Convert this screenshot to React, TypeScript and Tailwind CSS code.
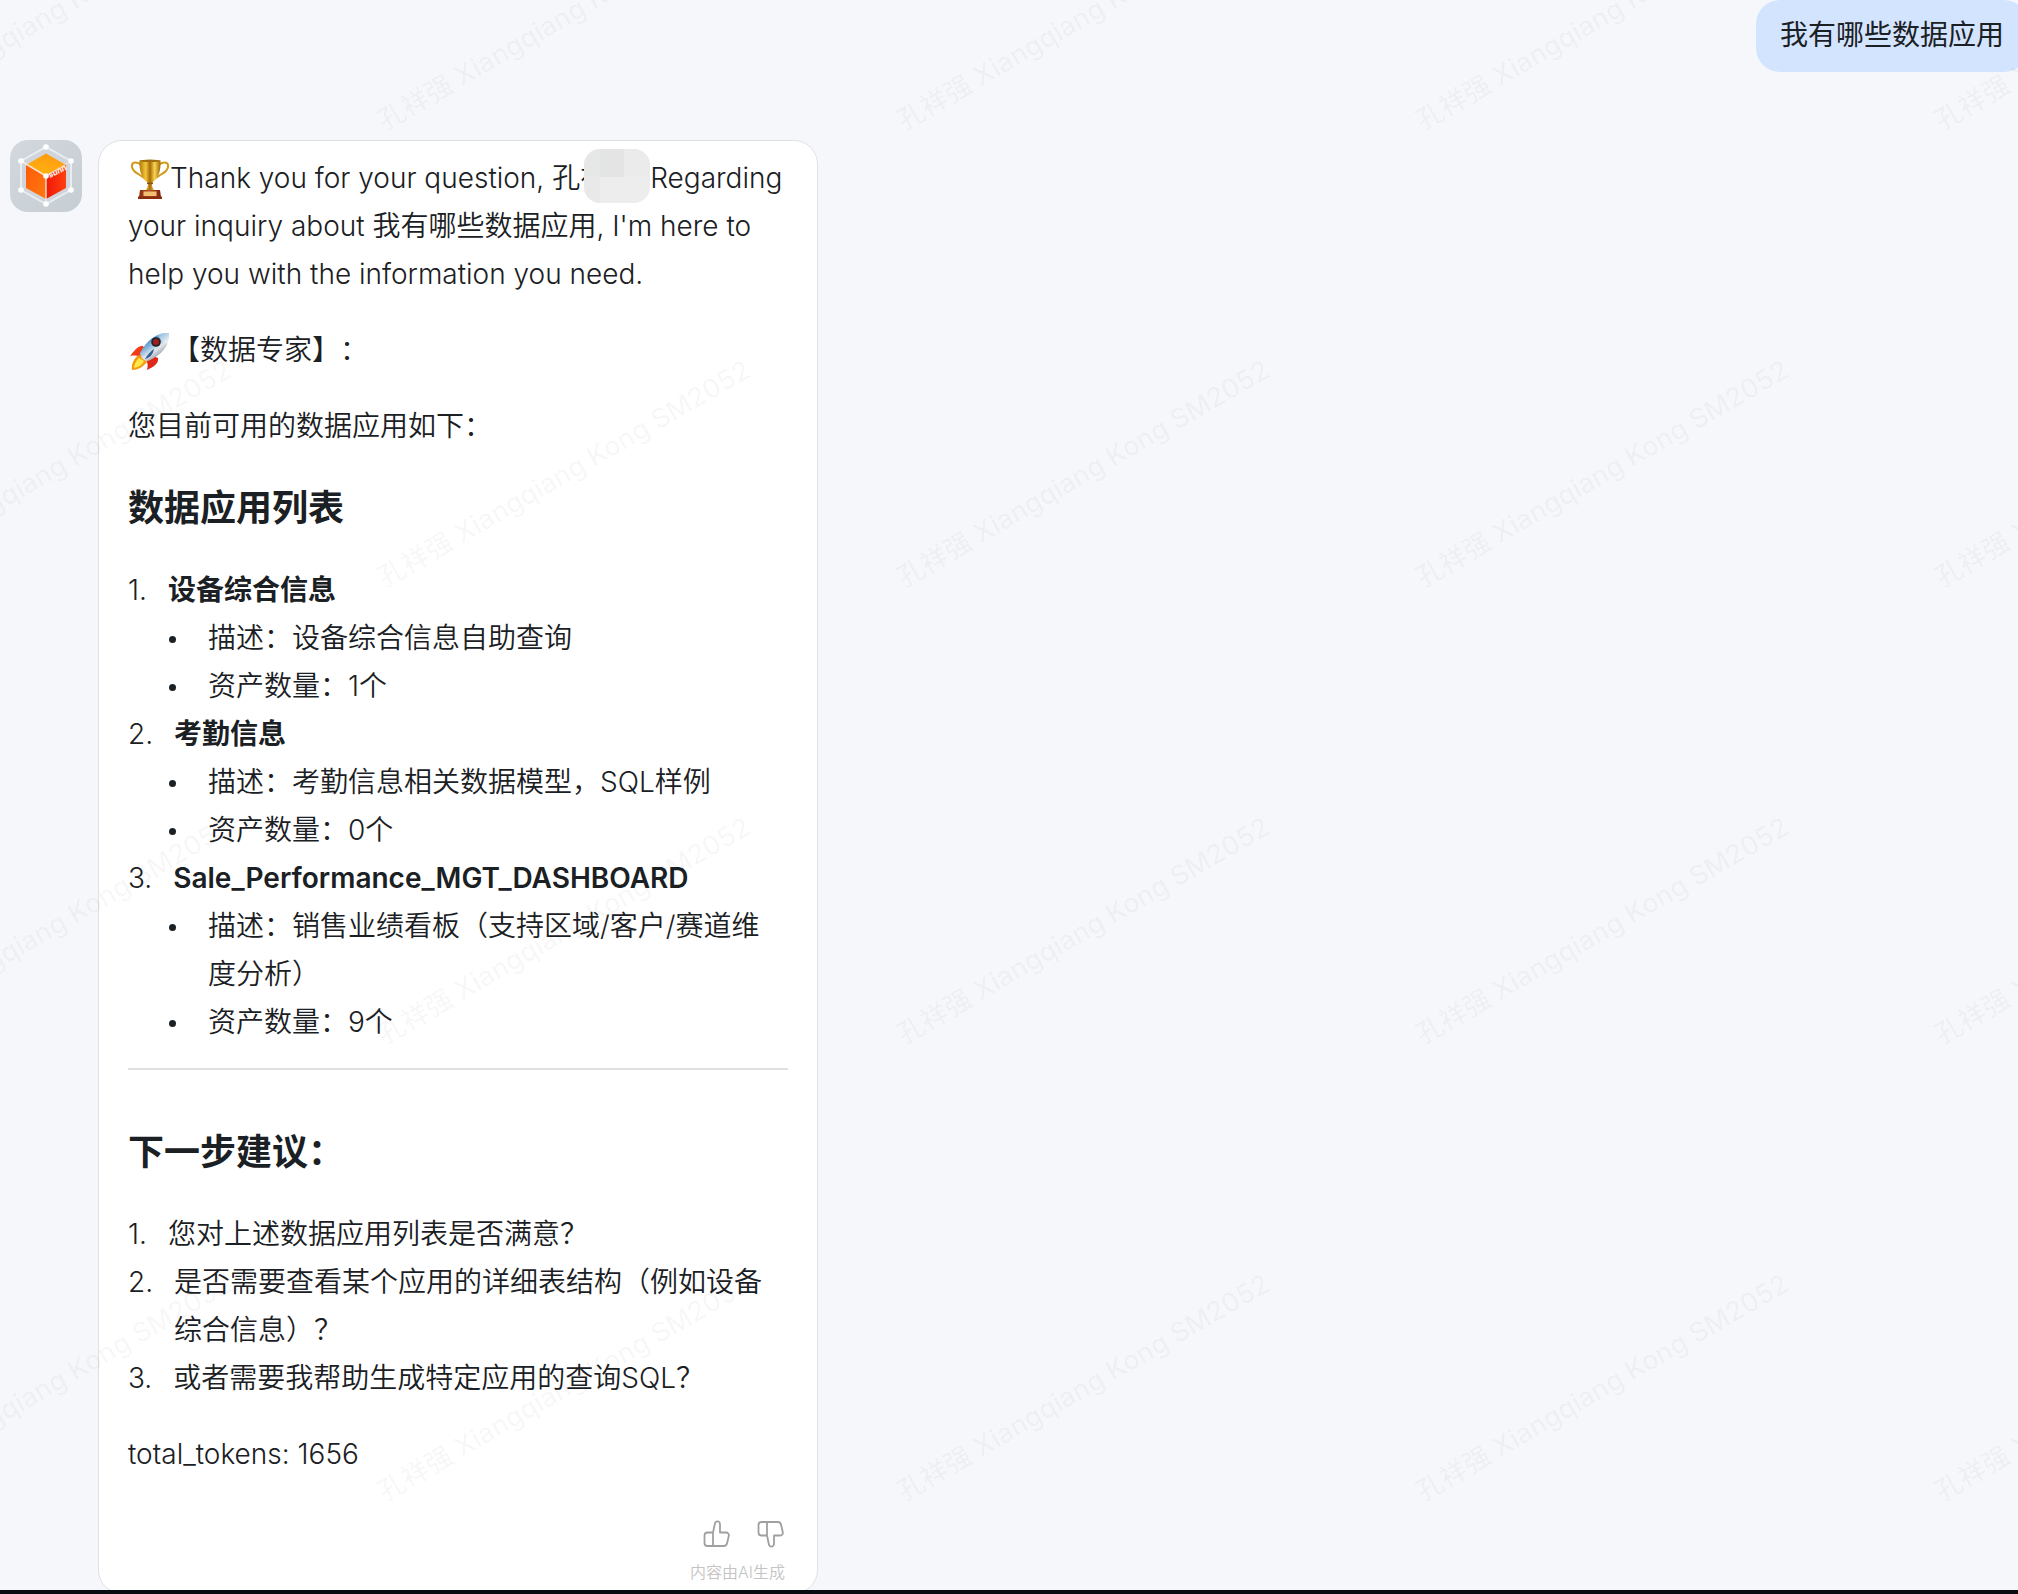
import React from "react";

function Trophy() {
  return (
    <svg viewBox="0 0 40 42" className="ml-0.5 inline-block h-[42px] w-[40px] align-middle" aria-label="trophy" role="img">
      <defs>
        <linearGradient id="cup" x1="0" x2="1">
          <stop offset="0" stopColor="#b07808" />
          <stop offset="0.3" stopColor="#f3c63a" />
          <stop offset="0.5" stopColor="#a86a08" />
          <stop offset="0.72" stopColor="#f8d650" />
          <stop offset="1" stopColor="#9c6406" />
        </linearGradient>
        <linearGradient id="wood" x1="0" x2="1">
          <stop offset="0" stopColor="#8a2c10" />
          <stop offset="0.5" stopColor="#b5532c" />
          <stop offset="1" stopColor="#7a220c" />
        </linearGradient>
      </defs>
      <path d="M11 5.500C5 2 1.200 3.500 2 8c.8 4.500 4.500 6 7 7.500 2 1.200 3.500 2.500 6 4" fill="none" stroke="#d29a1c" strokeWidth="2" />
      <path d="M29 5.500C35 2 38.800 3.500 38 8c-.8 4.500-4.500 6-7 7.500-2 1.200-3.500 2.500-6 4" fill="none" stroke="#d29a1c" strokeWidth="2" />
      <path d="M9.500 1.500h21c.4 9-1.500 17.500-7.500 21.500-1.500 1-1.500 5.500 1.500 8h-9c3-2.500 3-7 1.500-8C11 19 9.100 10.500 9.500 1.500z" fill="url(#cup)" />
      <ellipse cx="20" cy="1.800" rx="10.500" ry="1.200" fill="#a06c10" />
      <path d="M17 23.500h6v1.600h-6z" fill="#8a5406" />
      <path d="M10 31h20l1 7H9z" fill="url(#wood)" />
      <path d="M8 37.500h24V40H8z" fill="#8a2c10" />
      <path d="M13.500 32.500h13V37h-13z" fill="#f0c070" />
    </svg>
  );
}

function Rocket() {
  return (
    <svg viewBox="0 0 40 40" className="mx-0.5 inline-block h-[40px] w-[40px] align-middle" aria-label="rocket" role="img">
      <defs>
        <linearGradient id="hull" x1="0.2" y1="0.1" x2="0.8" y2="0.9">
          <stop offset="0" stopColor="#2b6ca6" />
          <stop offset="0.35" stopColor="#7fb2da" />
          <stop offset="0.6" stopColor="#e4e8ec" />
          <stop offset="1" stopColor="#6b7680" />
        </linearGradient>
      </defs>
      <path d="M13 14C8 13 4 19 0 24c5-1 8 0 11 1l5-7z" fill="#f03a18" />
      <path d="M28 26c1 5-4 9-11 12 1-4 1-7-1-10l7-4z" fill="#e02818" />
      <path d="M9 23C4 26 1 32 2 38c6 0 11-3 15-8z" fill="#f59a10" />
      <path d="M9 26c-3 3-5 6-5 10 5-1 8-3 10-7z" fill="#ffe84a" />
      <path d="M39 1C28 0 17 7 10 21c0 4 4 8 8 8C32 23 40 13 39 1z" fill="url(#hull)" />
      <path d="M39 1c-4-.4-8 .3-11 2 3 5 6 8 10 9 1-4 1.400-8 1-11z" fill="#fff" opacity="0.35" />
      <circle cx="26" cy="10" r="4.800" fill="#20242a" />
      <circle cx="26" cy="10" r="3" fill="#a81c1c" />
      <path d="M24 17c-3 2-7 6-9 10 4-1 8-4 9-10z" fill="#2f6396" />
    </svg>
  );
}

function Avatar() {
  const nodes = [[36, 7], [61, 21], [61, 50], [36, 64], [11, 50], [11, 21], [36, 36]];
  return (
    <svg viewBox="0 0 72 72" className="block h-[72px] w-[72px] shrink-0 rounded-[18px]" aria-label="assistant" role="img">
      <defs>
        <linearGradient id="tile" x1="0" y1="0" x2="1" y2="1">
          <stop offset="0" stopColor="#d2d8dd" />
          <stop offset="1" stopColor="#c6cdd3" />
        </linearGradient>
        <linearGradient id="top" x1="0.7" y1="0" x2="0.3" y2="1">
          <stop offset="0" stopColor="#ff9a10" />
          <stop offset="1" stopColor="#ffb310" />
        </linearGradient>
        <linearGradient id="left" x1="0" y1="0" x2="1" y2="1">
          <stop offset="0" stopColor="#ff5a08" />
          <stop offset="1" stopColor="#ff7a10" />
        </linearGradient>
        <linearGradient id="right" x1="0" y1="0" x2="1" y2="0">
          <stop offset="0" stopColor="#f01808" />
          <stop offset="1" stopColor="#ff4010" />
        </linearGradient>
      </defs>
      <rect width="72" height="72" fill="url(#tile)" />
      <path d="M36 7l25 14v29L36 64 11 50V21z" fill="#cfd5da" stroke="#e9edf0" strokeWidth="2" />
      <path d="M36 13.500L56 25 36 36 16 25z" fill="url(#top)" />
      <path d="M16 25l20 11v23L16 48z" fill="url(#left)" />
      <path d="M56 25L36 36v23l20-11z" fill="url(#right)" />
      <path d="M11 21l25 15M36 36v28" fill="none" stroke="#fbe9df" strokeWidth="1.500" opacity="0.9" />
      <path d="M36 36l25-15" fill="none" stroke="#fbe9df" strokeWidth="1.200" opacity="0.5" />
      <text x="40" y="38" transform="rotate(-27 40 38)" fontSize="8" fontWeight="700" fontStyle="italic" fill="#fff" fontFamily="Inter, sans-serif">sunn</text>
      {nodes.map(([x, y]) => (
        <circle key={x + "-" + y} cx={x} cy={y} r="2.800" fill="#fff" />
      ))}
    </svg>
  );
}

function ThumbUp() {
  return (
    <svg viewBox="0 0 28 28" className="h-7 w-7" fill="none" stroke="#a0a0a0" strokeWidth="1.800" strokeLinejoin="round" strokeLinecap="round">
      <path d="M10 12.500H4.500a3 3 0 0 0-3 3V23a3 3 0 0 0 3 3h16.200a3.500 3.500 0 0 0 3.400-2.700l1.700-7.500a2.700 2.700 0 0 0-2.600-3.300H17V4a2.600 2.600 0 0 0-4.900-1.200L10 12.500V26" />
    </svg>
  );
}

function Watermarks() {
  return (
    <div aria-hidden="true" className="pointer-events-none absolute -left-[214px] -top-[212px] grid auto-rows-[457px] grid-cols-[repeat(5,519px)]">
      {Array.from({ length: 20 }, (_, i) => (
        <div key={i} className="flex items-center justify-center">
          <span className="-rotate-[30deg] whitespace-nowrap text-[27px] font-medium text-black/[0.035]">孔祥强 Xiangqiang Kong SM2052</span>
        </div>
      ))}
    </div>
  );
}

const apps = [
  { name: "设备综合信息", desc: "设备综合信息自助查询", count: "1个" },
  { name: "考勤信息", desc: "考勤信息相关数据模型，SQL样例", count: "0个" },
  { name: "Sale_Performance_MGT_DASHBOARD", desc: "销售业绩看板（支持区域/客户/赛道维度分析）", count: "9个" },
];

const steps = [
  "您对上述数据应用列表是否满意？",
  "是否需要查看某个应用的详细表结构（例如设备综合信息）？",
  "或者需要我帮助生成特定应用的查询SQL？",
];

function Bullet({ children }: { children: React.ReactNode }) {
  return (
    <li className="flex gap-8">
      <span className="mt-[22px] h-[7px] w-[7px] shrink-0 rounded-full bg-[#1a2023]" />
      <span>{children}</span>
    </li>
  );
}

export default function App() {
  return (
    <div className="relative flex min-h-screen flex-col overflow-hidden bg-[#f5f7fb] font-['Inter','Noto_Sans_CJK_SC',sans-serif] text-[28px] font-[350] leading-[48px] text-[#1a2023]">
      <div className="flex justify-end">
        <div className="-mr-2.5 h-[72px] rounded-3xl bg-[#d3e4ff] px-6 pt-[11px] font-normal">我有哪些数据应用</div>
      </div>
      <main className="mt-[68px] flex flex-1 gap-4 pl-[10px]">
        <Avatar />
        <article className="w-[720px] rounded-3xl border border-[#dfe1e5] bg-white px-[29px] pt-[13px]">
          <p className="whitespace-nowrap">
            <Trophy />
            <span>Thank you for your question, </span>
            <span className="relative">
              孔祥
              <span className="absolute -top-3 left-8 grid h-[54px] w-[66px] grid-cols-[16px_24px_1fr] grid-rows-[28px_1fr] overflow-hidden rounded-2xl bg-[#ededed]">
                <span className="bg-[#e6e7e7]" />
                <span className="bg-[#e4e4e4]" />
                <span className="bg-[#ebebeb]" />
                <span className="bg-[#e9e9e9]" />
              </span>
            </span>
            <span className="pl-[42px]">Regarding</span>
            <br />
            your inquiry about 我有哪些数据应用, I'm here to
            <br />
            help you with the information you need.
          </p>
          <p className="mt-7 [text-spacing-trim:space-all]"><Rocket />【数据专家】：</p>
          <p className="mt-7">您目前可用的数据应用如下：</p>
          <h2 className="mt-[34px] text-[36px] font-bold">数据应用列表</h2>
          <ol className="mt-[34px]">
            {apps.map((a, i) => (
              <li key={a.name}>
                <div className="flex gap-[21px]">
                  <span>{i + 1}.</span>
                  <strong className="font-semibold">{a.name}</strong>
                </div>
                <ul className="pl-[41px] pr-1">
                  <Bullet>描述：{a.desc}</Bullet>
                  <Bullet>资产数量：{a.count}</Bullet>
                </ul>
              </li>
            ))}
          </ol>
          <hr className="mt-[22px] border-t-2 border-[#e0e0e0]" />
          <h2 className="mt-[58px] text-[36px] font-bold">下一步建议：</h2>
          <ol className="mt-[34px]">
            {steps.map((s, i) => (
              <li key={s} className="flex gap-[21px]">
                <span>{i + 1}.</span>
                <span>{s}</span>
              </li>
            ))}
          </ol>
          <p className="mt-7">total_tokens: 1656</p>
          <div className="mt-[42px] flex justify-end gap-[26px] pr-[3px]">
            <button type="button" aria-label="Like"><ThumbUp /></button>
            <button type="button" aria-label="Dislike"><span className="block -scale-y-100"><ThumbUp /></span></button>
          </div>
          <p className="mt-3 flex justify-end pr-[3px] text-[16px] leading-6 text-[#c4c4c4]">内容由AI生成</p>
        </article>
      </main>
      <Watermarks />
      <div className="absolute inset-x-0 bottom-0 h-1 bg-[#080b10]" />
    </div>
  );
}
